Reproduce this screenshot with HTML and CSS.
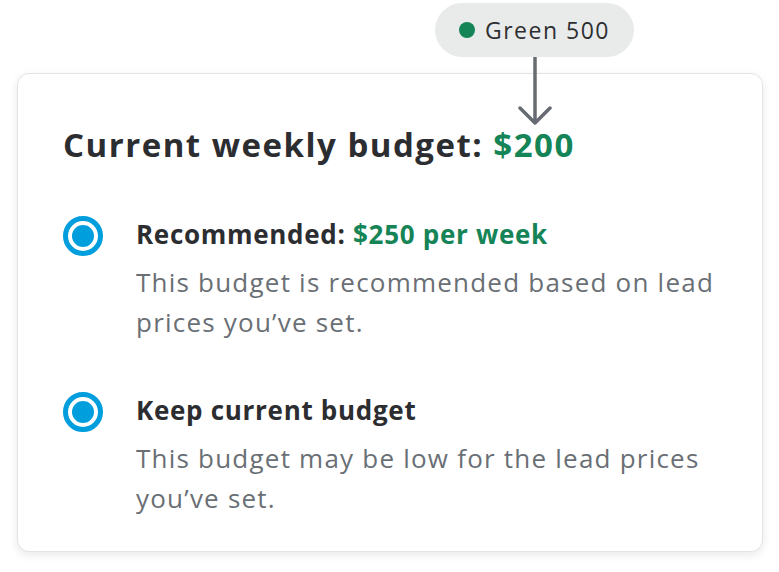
FILE: index.html
```html
<!DOCTYPE html>
<html>
<head>
<meta charset="utf-8">
<link rel="stylesheet" href="styles.css">
</head>
<body>
<div class="stage">
  <div class="annotation">
    <div class="pill"><span class="dot"></span><span class="pill-text">Green 500</span></div>
    <svg class="arrow" width="34" height="70" viewBox="0 0 34 70">
      <line x1="17" y1="0" x2="17" y2="66" stroke="#676b72" stroke-width="3.5"/>
      <polyline points="2,51 17,66 32,51" fill="none" stroke="#676b72" stroke-width="3.5" stroke-linecap="round" stroke-linejoin="round"/>
    </svg>
  </div>
  <div class="card">
    <h1 class="title">Current weekly budget: <span class="green">$200</span></h1>
    <div class="option">
      <span class="radio"><span class="radio-dot"></span></span>
      <div class="option-body">
        <div class="label">Recommended: <span class="green">$250 per week</span></div>
        <p class="desc">This budget is recommended based on lead prices you’ve set.</p>
      </div>
    </div>
    <div class="option">
      <span class="radio"><span class="radio-dot"></span></span>
      <div class="option-body">
        <div class="label">Keep current budget</div>
        <p class="desc">This budget may be low for the lead prices you’ve set.</p>
      </div>
    </div>
  </div>
</div>
</body>
</html>
```

FILE: styles.css
```css
* { box-sizing: border-box; }
html, body { margin: 0; padding: 0; background: #ffffff; }
body { font-family: "Open Sans", "Noto Sans", sans-serif; color: #2c2d30; }

.stage {
  position: relative;
  width: 779px;
  height: 572px;
  padding: 73px 16px 0 17px;
}

.annotation {
  position: absolute;
  left: 435px;
  top: 3px;
  width: 199px;
  display: flex;
  flex-direction: column;
  align-items: center;
  z-index: 2;
}

.pill {
  height: 54px;
  width: 199px;
  border-radius: 27px;
  background: #e9ebeb;
  display: flex;
  align-items: center;
  padding-left: 24px;
  gap: 10px;
}
.dot {
  width: 16px;
  height: 16px;
  border-radius: 50%;
  background: #158457;
}
.pill-text {
  font-size: 23px;
  color: #2e2f32;
  letter-spacing: 1.5px;
}

.arrow { display: block; }

.card {
  width: 746px;
  height: 479px;
  border: 1px solid #e3e5e5;
  border-radius: 12px;
  background: #fff;
  box-shadow: 0 3px 10px rgba(0,0,0,0.09);
  padding: 51px 28px 0 45px;
}

.title {
  margin: 0 0 51px;
  font-size: 33px;
  font-weight: 700;
  line-height: 40px;
  letter-spacing: 1.5px;
}
.green { color: #158457; }

.option {
  display: flex;
  align-items: flex-start;
  gap: 33px;
  margin-bottom: 50px;
}
.radio {
  flex: none;
  width: 40px;
  height: 40px;
  border-radius: 50%;
  border: 5px solid #009edc;
  display: flex;
  align-items: center;
  justify-content: center;
}
.radio-dot {
  width: 22px;
  height: 22px;
  border-radius: 50%;
  background: #009edc;
}
.label {
  font-size: 26px;
  font-weight: 700;
  line-height: 36px;
  letter-spacing: 0.7px;
}
.desc {
  margin: 10px 0 0;
  font-size: 26px;
  line-height: 40px;
  color: #6a6f75;
  letter-spacing: 1.22px;
}
```
